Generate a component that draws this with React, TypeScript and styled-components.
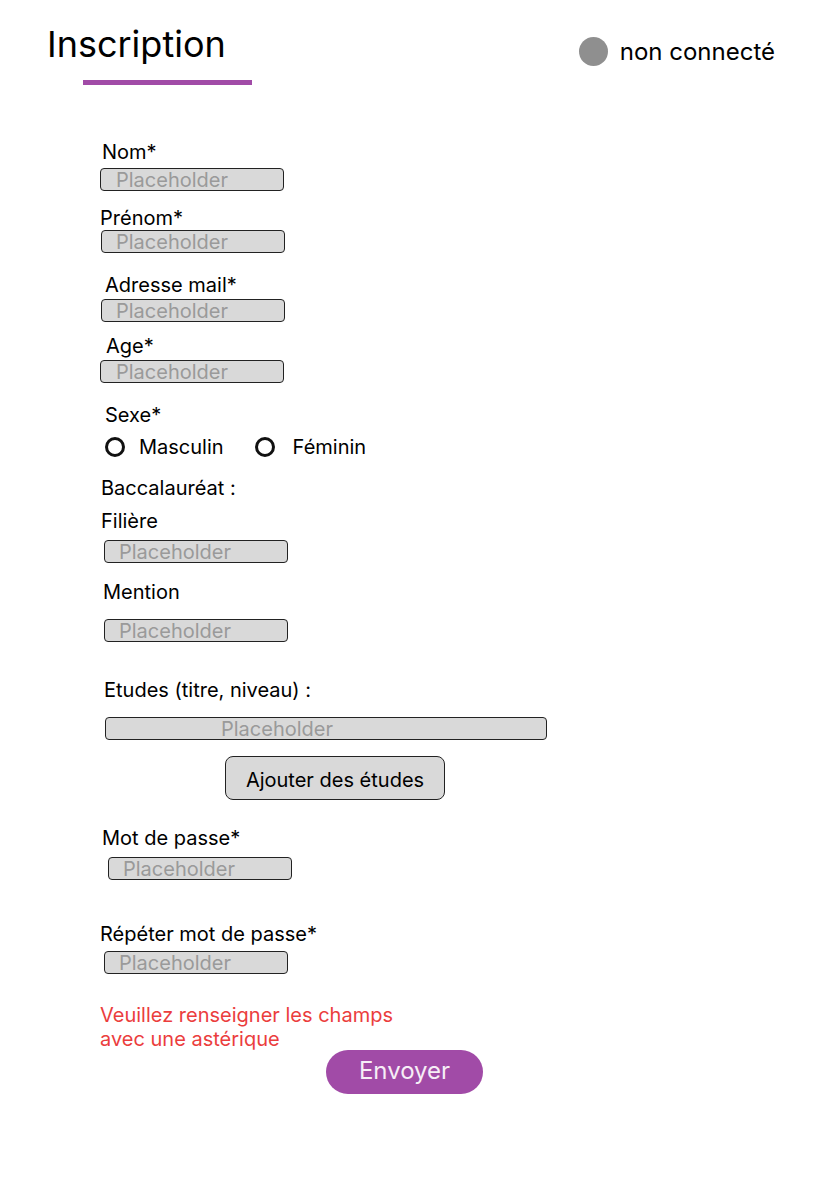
import styled, { createGlobalStyle } from "styled-components";

const GlobalStyle = createGlobalStyle`
  body {
    margin: 0;
    background: #ffffff;
    font-family: Inter, "Noto Sans", sans-serif;
    color: #000000;
  }
`;

const purple = "#a14ba7";

type FieldSpec = {
  label: string;
  labelX: number;
  labelTop: number;
  inputX: number;
  inputTop: number;
  pad?: number;
};

const topFields: FieldSpec[] = [
  { label: "Nom*", labelX: 2, labelTop: 55, inputX: 0, inputTop: 4, pad: 15 },
  { label: "Prénom*", labelX: 0, labelTop: 15, inputX: 1, inputTop: 0 },
  { label: "Adresse mail*", labelX: 5, labelTop: 20, inputX: 1, inputTop: 2 },
  { label: "Age*", labelX: 6, labelTop: 12, inputX: 0, inputTop: 2, pad: 15 },
];

const App = () => (
  <Page>
    <GlobalStyle />
    <Header>
      <TitleBlock>
        <Title>Inscription</Title>
        <Underline />
      </TitleBlock>
      <Status>
        <Dot />
        non connecté
      </Status>
    </Header>

    <Form>
      {topFields.map((f) => (
        <Field key={f.label}>
          <Label $x={f.labelX} $mt={f.labelTop}>
            {f.label}
          </Label>
          <TextInput $x={f.inputX} $mt={f.inputTop} $pad={f.pad} placeholder="Placeholder" />
        </Field>
      ))}

      <Label $x={5} $mt={20}>
        Sexe*
      </Label>
      <RadioGroup>
        <RadioOption $gap={14}>
          <RadioCircle />
          Masculin
        </RadioOption>
        <RadioOption $gap={18}>
          <RadioCircle />
          Féminin
        </RadioOption>
      </RadioGroup>

      <Label $x={1} $mt={17}>
        Baccalauréat :
      </Label>
      <Label $x={1} $mt={9}>
        Filière
      </Label>
      <TextInput $x={4} $mt={7} placeholder="Placeholder" />
      <Label $x={3} $mt={17}>
        Mention
      </Label>
      <TextInput $x={4} $mt={15} placeholder="Placeholder" />

      <Label $x={4} $mt={36}>
        Etudes (titre, niveau) :
      </Label>
      <TextInput $x={5} $mt={15} $w={442} $pad={115} placeholder="Placeholder" />
      <GreyButton type="button">Ajouter des études</GreyButton>

      <Label $x={2} $mt={26}>
        Mot de passe*
      </Label>
      <TextInput $x={8} $mt={7} placeholder="Placeholder" />
      <Label $x={0} $mt={42}>
        Répéter mot de passe*
      </Label>
      <TextInput $x={4} $mt={5} placeholder="Placeholder" />

      <ErrorText>
        Veuillez renseigner les champs
        <br />
        avec une astérique
      </ErrorText>
      <SubmitButton type="submit">Envoyer</SubmitButton>
    </Form>
  </Page>
);

const Page = styled.div`
  width: 834px;
  min-height: 1194px;
`;

const Header = styled.header`
  display: flex;
  justify-content: space-between;
  align-items: flex-start;
  padding: 22px 59px 0 47px;
`;

const TitleBlock = styled.div`
  display: flex;
  flex-direction: column;
`;

const Title = styled.h1`
  margin: 0;
  font-size: 36px;
  font-weight: 400;
  line-height: 44px;
`;

const Underline = styled.div`
  width: 169px;
  height: 5px;
  margin: 14px 0 0 36px;
  background: ${purple};
`;

const Status = styled.div`
  display: flex;
  align-items: center;
  gap: 12px;
  margin-top: 15px;
  font-size: 24px;
  line-height: 28px;
`;

const Dot = styled.span`
  width: 29px;
  height: 29px;
  border-radius: 50%;
  background: #8f8f8f;
`;

const Form = styled.form`
  display: flex;
  flex-direction: column;
  align-items: flex-start;
  padding: 0 0 100px 100px;
`;

const Field = styled.div`
  display: flex;
  flex-direction: column;
  align-items: flex-start;
`;

const Label = styled.label<{ $x: number; $mt: number }>`
  margin: ${(p) => p.$mt}px 0 0 ${(p) => p.$x}px;
  font-size: 20px;
  line-height: 24px;
`;

const TextInput = styled.input<{ $x: number; $mt: number; $w?: number; $pad?: number }>`
  box-sizing: border-box;
  width: ${(p) => p.$w ?? 184}px;
  height: 23px;
  margin: ${(p) => p.$mt}px 0 0 ${(p) => p.$x}px;
  padding: 0 0 0 ${(p) => p.$pad ?? 14}px;
  border: 1px solid #222222;
  border-radius: 4px;
  background: #d9d9d9;
  font-family: Inter, "Noto Sans", sans-serif;
  font-size: 20px;
  color: #000000;
  outline: none;

  &::placeholder {
    color: #9a9a9a;
    opacity: 1;
  }
`;

const RadioGroup = styled.div`
  display: flex;
  align-items: center;
  gap: 31px;
  margin: 8px 0 0 5px;
`;

const RadioOption = styled.label<{ $gap: number }>`
  display: flex;
  align-items: center;
  gap: ${(p) => p.$gap}px;
  font-size: 20px;
  line-height: 24px;
`;

const RadioCircle = styled.span`
  box-sizing: border-box;
  width: 20px;
  height: 20px;
  border: 3px solid #111111;
  border-radius: 50%;
`;

const GreyButton = styled.button`
  box-sizing: border-box;
  width: 220px;
  height: 44px;
  margin: 16px 0 0 125px;
  padding: 3px 0 0;
  border: 1px solid #222222;
  border-radius: 8px;
  background: #d9d9d9;
  font-family: Inter, "Noto Sans", sans-serif;
  font-size: 20px;
  color: #000000;
`;

const ErrorText = styled.p`
  margin: 29px 0 0 0;
  font-size: 20px;
  line-height: 24px;
  color: #eb3d3d;
`;

const SubmitButton = styled.button`
  width: 157px;
  height: 44px;
  margin: -1px 0 0 226px;
  padding: 0 0 3px;
  border: none;
  border-radius: 22px;
  background: ${purple};
  font-family: Inter, "Noto Sans", sans-serif;
  font-size: 24px;
  color: #f6eef6;
`;

export default App;
